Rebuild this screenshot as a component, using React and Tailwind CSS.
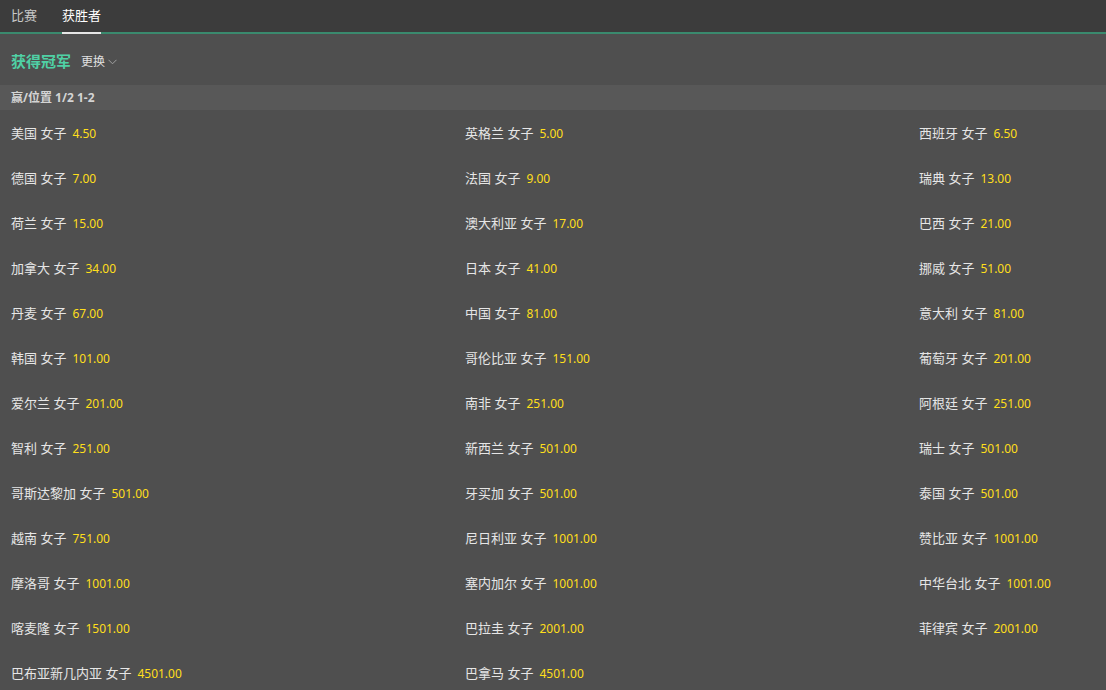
import React from "react";

const data = [
  ["美国", "4.50"], ["英格兰", "5.00"], ["西班牙", "6.50"],
  ["德国", "7.00"], ["法国", "9.00"], ["瑞典", "13.00"],
  ["荷兰", "15.00"], ["澳大利亚", "17.00"], ["巴西", "21.00"],
  ["加拿大", "34.00"], ["日本", "41.00"], ["挪威", "51.00"],
  ["丹麦", "67.00"], ["中国", "81.00"], ["意大利", "81.00"],
  ["韩国", "101.00"], ["哥伦比亚", "151.00"], ["葡萄牙", "201.00"],
  ["爱尔兰", "201.00"], ["南非", "251.00"], ["阿根廷", "251.00"],
  ["智利", "251.00"], ["新西兰", "501.00"], ["瑞士", "501.00"],
  ["哥斯达黎加", "501.00"], ["牙买加", "501.00"], ["泰国", "501.00"],
  ["越南", "751.00"], ["尼日利亚", "1001.00"], ["赞比亚", "1001.00"],
  ["摩洛哥", "1001.00"], ["塞内加尔", "1001.00"], ["中华台北", "1001.00"],
  ["喀麦隆", "1501.00"], ["巴拉圭", "2001.00"], ["菲律宾", "2001.00"],
  ["巴布亚新几内亚", "4501.00"], ["巴拿马", "4501.00"],
];

export default function App() {
  return (
    <div
      className="w-[1106px] h-[690px] overflow-hidden bg-[#4f4f4f] text-[13px]"
      style={{ fontFamily: '"Noto Sans", "Noto Sans CJK SC", sans-serif' }}
    >
      <div className="h-[32px] bg-[#3c3c3c] flex items-stretch pl-[11px] gap-[25px]">
        <div className="flex items-center text-[#c8c8c8]">比赛</div>
        <div className="flex items-center text-white relative">
          获胜者
          <div className="absolute left-0 right-0 bottom-[-2px] h-[2px] bg-[#e6e6e6] z-10" />
        </div>
      </div>
      <div className="h-[2px] bg-[#3a8a6e]" />
      <div className="h-[51px] flex items-center pl-[11px] gap-[10px] pt-[3px]">
        <span className="text-[#4fd1a5] font-bold text-[15px]">获得冠军</span>
        <span className="text-[#e0e0e0] text-[12px] flex items-center gap-[3px] pt-[1px]">
          更换
          <svg width="9" height="6" viewBox="0 0 9 6" fill="none">
            <path d="M0.5 0.8 L4.5 4.8 L8.5 0.8" stroke="#a0a0a0" strokeWidth="1" />
          </svg>
        </span>
      </div>
      <div className="h-[25px] bg-[#585858] flex items-center pl-[11px] text-[12px] font-bold text-[#d4d4d4]">
        赢/位置 1/2 1-2
      </div>
      <div className="grid grid-cols-[454px_454px_1fr] pl-[11px] pt-[1px]">
        {data.map(([name, odds], i) => (
          <div key={i} className="h-[45px] flex items-center whitespace-nowrap">
            <span className="text-[#e6e6e6]">{name} 女子</span>
            <span className="text-[#ffdf1b] ml-[6px] text-[12px]">{odds}</span>
          </div>
        ))}
      </div>
    </div>
  );
}
